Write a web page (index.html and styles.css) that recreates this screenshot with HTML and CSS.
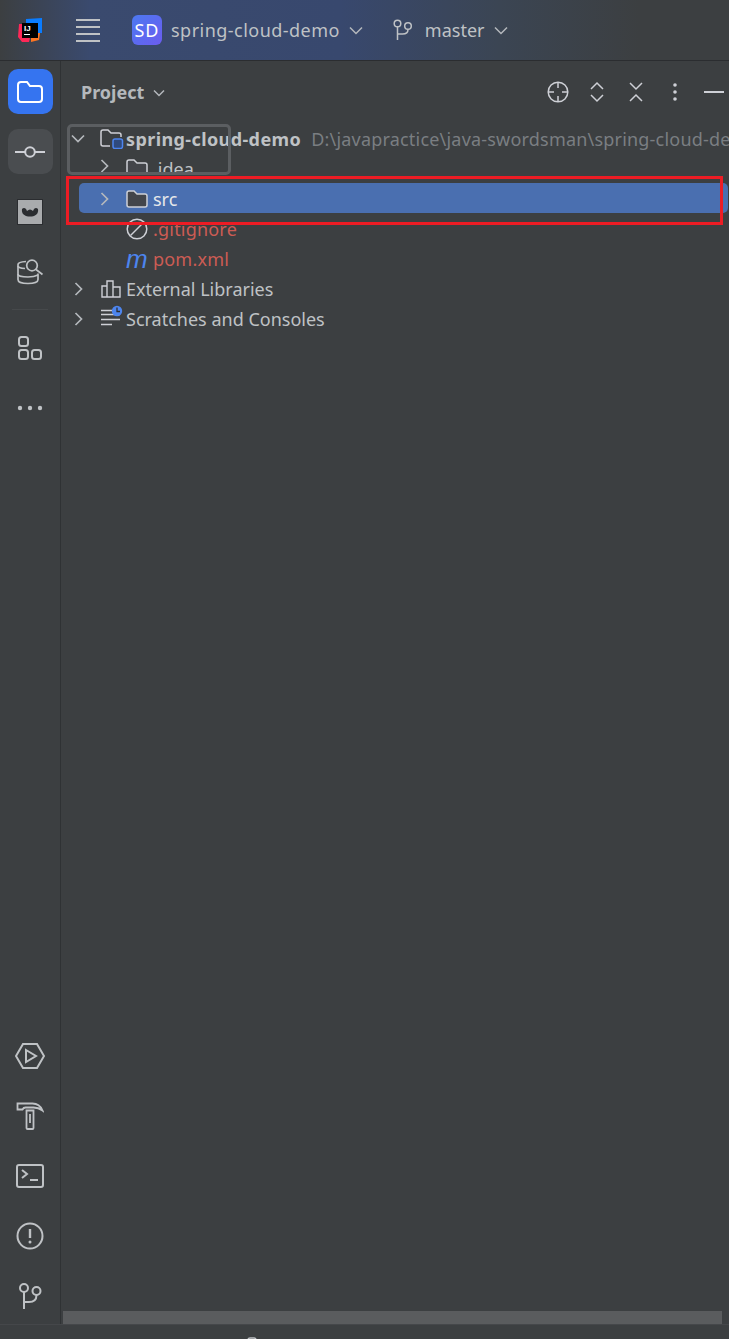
FILE: index.html
```html
<!DOCTYPE html>
<html lang="en">
<head>
    <meta charset="UTF-8">
    <meta name="viewport" content="width=device-width, initial-scale=1.0">
    <title>spring-cloud-demo</title>
    <link rel="stylesheet" href="styles.css">
</head>
<body>

<header class="topbar">
    <svg class="logo" width="24" height="24" viewBox="0 0 24 24">
        <path d="M8 1L24 0v15h-4V5H8z" fill="#0a7cff"/>
        <path d="M1 6h3v14h8l-1 4H4L0 19z" fill="#fe2857"/>
        <path d="M13 20h7v-5h2l-1 7-8 2z" fill="#fd7522"/>
        <rect x="4" y="5" width="16" height="15" fill="#000"/>
        <rect x="6" y="16" width="6" height="1" fill="#fff"/>
        <text class="logo-text" x="6" y="13">IJ</text>
    </svg>
    <svg class="menu-icon" width="24" height="24" viewBox="0 0 24 24">
        <path d="M0 2h24M0 9h24M0 16h24M0 23h24" stroke="#bfc2c5" stroke-width="2"/>
    </svg>
    <div class="project-badge">SD</div>
    <span class="topbar-text project-name">spring-cloud-demo</span>
    <svg class="chev" width="14" height="9" viewBox="0 0 14 9"><path d="M1 1.500l6 6 6-6" fill="none" stroke="#b4b8bc" stroke-width="1.500"/></svg>
    <svg class="branch-icon" width="20" height="22" viewBox="0 0 20 22">
        <circle cx="4.500" cy="4.500" r="3.300" fill="none" stroke="#bfc2c5" stroke-width="1.500"/>
        <circle cx="15" cy="7" r="3.300" fill="none" stroke="#bfc2c5" stroke-width="1.500"/>
        <path d="M4.500 8v13M4.500 15h5q5.500 0 5.500-4.500" fill="none" stroke="#bfc2c5" stroke-width="1.500"/>
    </svg>
    <span class="topbar-text branch-name">master</span>
    <svg class="chev" width="14" height="9" viewBox="0 0 14 9"><path d="M1 1.500l6 6 6-6" fill="none" stroke="#b4b8bc" stroke-width="1.500"/></svg>
</header>

<div class="main">
    <aside class="rail">
        <div class="rail-group">
            <div class="rail-btn active">
                <svg width="28" height="24" viewBox="0 0 28 24"><path d="M2 5q0-3 3-3h6l3 4h9q3 0 3 3v10q0 3-3 3H5q-3 0-3-3z" fill="none" stroke="#fff" stroke-width="2"/></svg>
            </div>
            <div class="rail-btn hover">
                <svg width="30" height="14" viewBox="0 0 30 14"><circle cx="15" cy="7" r="4.800" fill="none" stroke="#ced0d6" stroke-width="2"/><path d="M0 7h10M20 7h10" stroke="#ced0d6" stroke-width="2"/></svg>
            </div>
            <div class="rail-btn">
                <svg width="26" height="26" viewBox="0 0 26 26"><rect x="0.500" y="0.500" width="25" height="25" fill="#a9abad" stroke="#2b2d30" stroke-width="1"/><path d="M5 10q2-2 4 0l1 2q3-3 6 0l1-2q2-2 4 0 1 5-4 7-4 1-8 0-5-2-4-7z" fill="#2b2d30"/></svg>
            </div>
            <div class="rail-btn">
                <svg width="28" height="26" viewBox="0 0 28 26"><g fill="none" stroke="#bfc2c5" stroke-width="1.700"><path d="M10 2.500q-8 .5-8 3v15q0 4 10 4t10-4v-6"/><path d="M2 7q0 2 7 2.500M2 15q0 3 10 3 6 0 10-2"/><circle cx="16" cy="6.500" r="5.300"/><path d="M20 10.500l6.500 5"/></g></svg>
            </div>
            <div class="rail-sep"></div>
            <div class="rail-btn">
                <svg width="26" height="26" viewBox="0 0 26 26"><g fill="none" stroke="#bfc2c5" stroke-width="2"><rect x="2" y="2" width="9" height="9" rx="2.500"/><rect x="2" y="15" width="9" height="9" rx="2.500"/><rect x="15" y="15" width="9" height="9" rx="2.500"/></g></svg>
            </div>
            <div class="rail-btn">
                <svg width="26" height="6" viewBox="0 0 26 6"><circle cx="3" cy="3" r="2.200" fill="#bfc2c5"/><circle cx="13" cy="3" r="2.200" fill="#bfc2c5"/><circle cx="23" cy="3" r="2.200" fill="#bfc2c5"/></svg>
            </div>
        </div>
        <div class="rail-group">
            <div class="rail-btn">
                <svg width="30" height="26" viewBox="0 0 30 26"><g fill="none" stroke="#bfc2c5" stroke-width="2"><path d="M8 1h14l7 12-7 12H8L1 13z"/><path d="M11 7l10 6-10 6z"/></g></svg>
            </div>
            <div class="rail-btn">
                <svg width="28" height="28" viewBox="0 0 28 28"><g fill="none" stroke="#bfc2c5" stroke-width="1.800"><path d="M1.500 1.500h15q7 0 10 7-4-3-9-3h-8q-2 0-3 2h-5z"/><path d="M10.500 8.500h7V26q0 1-1 1h-5q-1 0-1-1z"/><path d="M14 12v9"/></g></svg>
            </div>
            <div class="rail-btn">
                <svg width="28" height="24" viewBox="0 0 28 24"><g fill="none" stroke="#bfc2c5" stroke-width="2"><rect x="1" y="1" width="26" height="22" rx="2"/><path d="M6 6l5 4-5 4M14 16h8"/></g></svg>
            </div>
            <div class="rail-btn">
                <svg width="28" height="28" viewBox="0 0 28 28"><circle cx="14" cy="14" r="12.500" fill="none" stroke="#bfc2c5" stroke-width="2"/><path d="M14 7v9" stroke="#bfc2c5" stroke-width="2.400"/><circle cx="14" cy="20" r="1.500" fill="#bfc2c5"/></svg>
            </div>
            <div class="rail-btn">
                <svg width="24" height="26" viewBox="0 0 24 26"><g fill="none" stroke="#bfc2c5" stroke-width="2"><circle cx="6" cy="5" r="4"/><circle cx="18.500" cy="8" r="4"/><path d="M6 9v17M6 19h5q7.500 0 7.500-7"/></g></svg>
            </div>
        </div>
    </aside>

    <section class="panel">
        <div class="panel-head">
            <span class="panel-title">Project</span>
            <svg class="panel-chev" width="12" height="8" viewBox="0 0 12 8"><path d="M1 1.500l5 5 5-5" fill="none" stroke="#b4b8bc" stroke-width="1.500"/></svg>
            <div class="panel-tools">
                <div class="tool"><svg width="22" height="22" viewBox="0 0 22 22"><g fill="none" stroke="#ced0d6" stroke-width="1.500"><circle cx="11" cy="11" r="9.800"/><path d="M11 1v6M11 15v6M1 11h6M15 11h6"/></g></svg></div>
                <div class="tool"><svg width="14" height="22" viewBox="0 0 14 22"><path d="M1 8l6-6 6 6M1 14l6 6 6-6" fill="none" stroke="#ced0d6" stroke-width="1.500"/></svg></div>
                <div class="tool"><svg width="14" height="22" viewBox="0 0 14 22"><path d="M1 2l6 6 6-6M1 20l6-6 6 6" fill="none" stroke="#ced0d6" stroke-width="1.500"/></svg></div>
                <div class="tool"><svg width="4" height="20" viewBox="0 0 4 20"><circle cx="2" cy="3" r="1.800" fill="#ced0d6"/><circle cx="2" cy="10" r="1.800" fill="#ced0d6"/><circle cx="2" cy="17" r="1.800" fill="#ced0d6"/></svg></div>
                <div class="tool"><svg width="20" height="2" viewBox="0 0 20 2"><path d="M0 1h20" stroke="#ced0d6" stroke-width="2"/></svg></div>
            </div>
        </div>

        <div class="tree">
            <div class="row">
                <svg class="arrow open" width="14" height="10" viewBox="0 0 14 10"><path d="M1 1.500l6 6 6-6" fill="none" stroke="#b4b8bc" stroke-width="1.700"/></svg>
                <svg class="icon root" width="24" height="20" viewBox="0 0 24 20"><path d="M10 17H3q-2 0-2-2V3q0-2 2-2h5l3 3h8q2 0 2 2v2" fill="none" stroke="#ced0d6" stroke-width="1.500"/><rect x="13" y="10" width="9.500" height="9.500" rx="2" fill="#2f4a7d" stroke="#4d85ee" stroke-width="1.500"/></svg>
                <span class="bold">spring-cloud-demo</span>
                <span class="path">D:\javapractice\java-swordsman\spring-cloud-demo</span>
            </div>
            <div class="row clipped indent">
                <svg class="arrow" width="9" height="14" viewBox="0 0 9 14"><path d="M1.500 1l6 6-6 6" fill="none" stroke="#b4b8bc" stroke-width="1.700"/></svg>
                <svg class="icon folder" width="22" height="18" viewBox="0 0 22 18"><path d="M1 3q0-2 2-2h5l3 3h8q2 0 2 2v9q0 2-2 2H3q-2 0-2-2z" fill="#43454a" stroke="#ced0d6" stroke-width="1.500"/></svg>
                <span class="name">.idea</span>
            </div>
            <div class="row selected">
                <svg class="arrow" width="9" height="14" viewBox="0 0 9 14"><path d="M1.500 1l6 6-6 6" fill="none" stroke="#b4b8bc" stroke-width="1.700"/></svg>
                <svg class="icon folder" width="22" height="18" viewBox="0 0 22 18"><path d="M1 3q0-2 2-2h5l3 3h8q2 0 2 2v9q0 2-2 2H3q-2 0-2-2z" fill="#43454a" stroke="#ced0d6" stroke-width="1.500"/></svg>
                <span class="name white">src</span>
            </div>
            <div class="row indent">
                <span class="arrow-gap"></span>
                <svg class="icon folder" width="22" height="22" viewBox="0 0 22 22"><g fill="none" stroke="#ced0d6" stroke-width="1.500"><circle cx="11" cy="11" r="9.800"/><path d="M4.500 17.500l13-13"/></g></svg>
                <span class="name red">.gitignore</span>
            </div>
            <div class="row indent">
                <span class="arrow-gap"></span>
                <span class="m-icon">m</span>
                <span class="name red">pom.xml</span>
            </div>
            <div class="row">
                <svg class="arrow closed" width="9" height="14" viewBox="0 0 9 14"><path d="M1.500 1l6 6-6 6" fill="none" stroke="#b4b8bc" stroke-width="1.700"/></svg>
                <svg class="icon libs" width="20" height="18" viewBox="0 0 20 18"><g fill="none" stroke="#ced0d6" stroke-width="1.400"><path d="M1 6h5v11H1zM6 1h6v16H6zM12 7h7v10h-7z"/></g></svg>
                <span class="name">External Libraries</span>
            </div>
            <div class="row">
                <svg class="arrow closed" width="9" height="14" viewBox="0 0 9 14"><path d="M1.500 1l6 6-6 6" fill="none" stroke="#b4b8bc" stroke-width="1.700"/></svg>
                <svg class="icon scratch" width="22" height="30" viewBox="0 0 22 30"><path d="M0 6.500h12M0 10.500h19M0 15.500h19M0 20.500h11" stroke="#ced0d6" stroke-width="1.500"/><circle cx="16" cy="7" r="5.200" fill="#4d85ee"/><path d="M16 3.500V7.500h3" fill="none" stroke="#2b2d30" stroke-width="1.300"/></svg>
                <span class="name">Scratches and Consoles</span>
            </div>
        </div>

        <div class="scrollbar"></div>
    </section>
</div>

<footer class="statusbar">
    <svg width="10" height="6" viewBox="0 0 10 6"><rect x="1" y="1" width="8" height="8" rx="2" fill="none" stroke="#bfc2c5" stroke-width="1.500"/></svg>
</footer>

<div class="drag-ghost"></div>
<div class="red-mark"></div>

</body>
</html>
```

FILE: styles.css
```css
* {
    box-sizing: border-box;
}
html, body {
    height: 100%;
}
body {
    margin: 0;
    height: 1339px;
    overflow: hidden;
    display: flex;
    flex-direction: column;
    background-color: #3c3f41;
    font-family: "Noto Sans", "Open Sans", sans-serif;
    font-size: 18px;
    color: #bfc2c5;
}
svg {
    display: block;
    flex: none;
}

/* top bar */
.topbar {
    height: 61px;
    flex: none;
    display: flex;
    align-items: center;
    padding-left: 18px;
    background: linear-gradient(90deg, #3c3f41 0, #3a4a6e 90px, #38486e 340px, #3b4553 500px, #3c3f41 640px);
    border-bottom: 1px solid #2b2d30;
}
.logo-text {
    font-family: "Liberation Sans", sans-serif;
    font-size: 8px;
    font-weight: 700;
    fill: #fff;
}
.menu-icon {
    margin-left: 34px;
}
.project-badge {
    width: 30px;
    height: 30px;
    margin-left: 32px;
    border-radius: 6px;
    background: linear-gradient(135deg, #4c79f0, #6b5cf0);
    color: #fff;
    font-size: 18px;
    letter-spacing: 1px;
    line-height: 30px;
    text-align: center;
}
.topbar-text {
    color: #bfc2c5;
    line-height: 30px;
}
.project-name {
    margin-left: 9px;
    letter-spacing: .47px;
}
.chev {
    margin-left: 9px;
}
.branch-icon {
    margin-left: 30px;
}
.branch-name {
    margin-left: 12px;
}

.main {
    flex: 1;
    display: flex;
    min-height: 0;
}

/* left tool strip */
.rail {
    width: 61px;
    flex: none;
    display: flex;
    flex-direction: column;
    justify-content: space-between;
    padding: 8px 0 6px 8px;
    border-right: 1px solid #2f3234;
}
.rail-group {
    display: flex;
    flex-direction: column;
    gap: 15px;
}
.rail-btn {
    width: 45px;
    height: 45px;
    border-radius: 10px;
    display: flex;
    align-items: center;
    justify-content: center;
}
.rail-btn svg {
    margin-left: -2px;
}
.rail-btn.active {
    background-color: #3574f0;
}
.rail-btn.hover {
    background-color: #4a4d50;
}
.rail-sep {
    width: 36px;
    height: 1px;
    margin-left: 4px;
    background-color: #46494b;
}

/* project panel */
.panel {
    flex: 1;
    min-width: 0;
    display: flex;
    flex-direction: column;
    overflow: hidden;
}
.panel-head {
    height: 63px;
    flex: none;
    display: flex;
    align-items: flex-start;
    padding: 19px 0 0 20px;
}
.panel-title {
    font-weight: 700;
    color: #b4b8bc;
    line-height: 24px;
}
.panel-chev {
    margin: 9px 0 0 9px;
}
.panel-tools {
    margin-left: auto;
    margin-right: -4px;
    display: flex;
}
.tool {
    width: 39px;
    height: 24px;
    display: flex;
    align-items: center;
    justify-content: center;
}
.tree {
    flex: 1;
}
.row {
    height: 30px;
    display: flex;
    align-items: center;
    white-space: nowrap;
    padding-left: 10px;
}
.row.indent {
    padding-left: 39px;
}
.row.clipped {
    height: 20px;
    margin-bottom: 9px;
    overflow: hidden;
    align-items: flex-start;
    padding-top: 5px;
}
.row.clipped .name {
    line-height: 20px;
}
.row.selected {
    background-color: #4a6fb0;
    border-radius: 5px;
    margin: 0 1px 1px 18px;
    padding: 2px 0 0 21px;
}
.arrow {
    margin-right: 17px;
}
.arrow.open {
    margin-right: 15px;
}
.arrow.closed {
    margin: 0 18px 0 3px;
}
.arrow-gap {
    width: 26px;
    flex: none;
}
.icon {
    margin-right: 4px;
}
.icon.root {
    margin-right: 2px;
}
.icon.folder {
    margin-right: 5px;
}
.icon.libs {
    margin-right: 5px;
}
.icon.scratch {
    margin-right: 3px;
}
.bold {
    font-weight: 700;
    color: #bfc2c5;
    letter-spacing: .4px;
}
.path {
    margin-left: 10px;
    color: #7a7e82;
    letter-spacing: .2px;
}
.name {
    color: #bfc2c5;
}
.name.white {
    color: #e6e8ea;
}
.name.red {
    color: #cc5c54;
    letter-spacing: .2px;
}
.m-icon {
    width: 27px;
    flex: none;
    font-family: "Liberation Sans", sans-serif;
    font-style: italic;
    font-size: 26px;
    line-height: 22px;
    color: #4d85ee;
}
.scrollbar {
    height: 13px;
    margin: 0 7px 0 2px;
    flex: none;
    background-color: #5a5c5e;
}
.statusbar {
    height: 15px;
    flex: none;
    border-top: 1px solid #45474a;
    padding: 12px 0 0 247px;
}

/* overlays on top of the tree */
.drag-ghost {
    position: absolute;
    left: 67px;
    top: 124px;
    width: 164px;
    height: 51px;
    border: 3px solid #5b5e61;
    border-radius: 5px;
}
.red-mark {
    position: absolute;
    left: 66px;
    top: 176px;
    width: 657px;
    height: 49px;
    border: 3px solid #ed1c24;
}
```
